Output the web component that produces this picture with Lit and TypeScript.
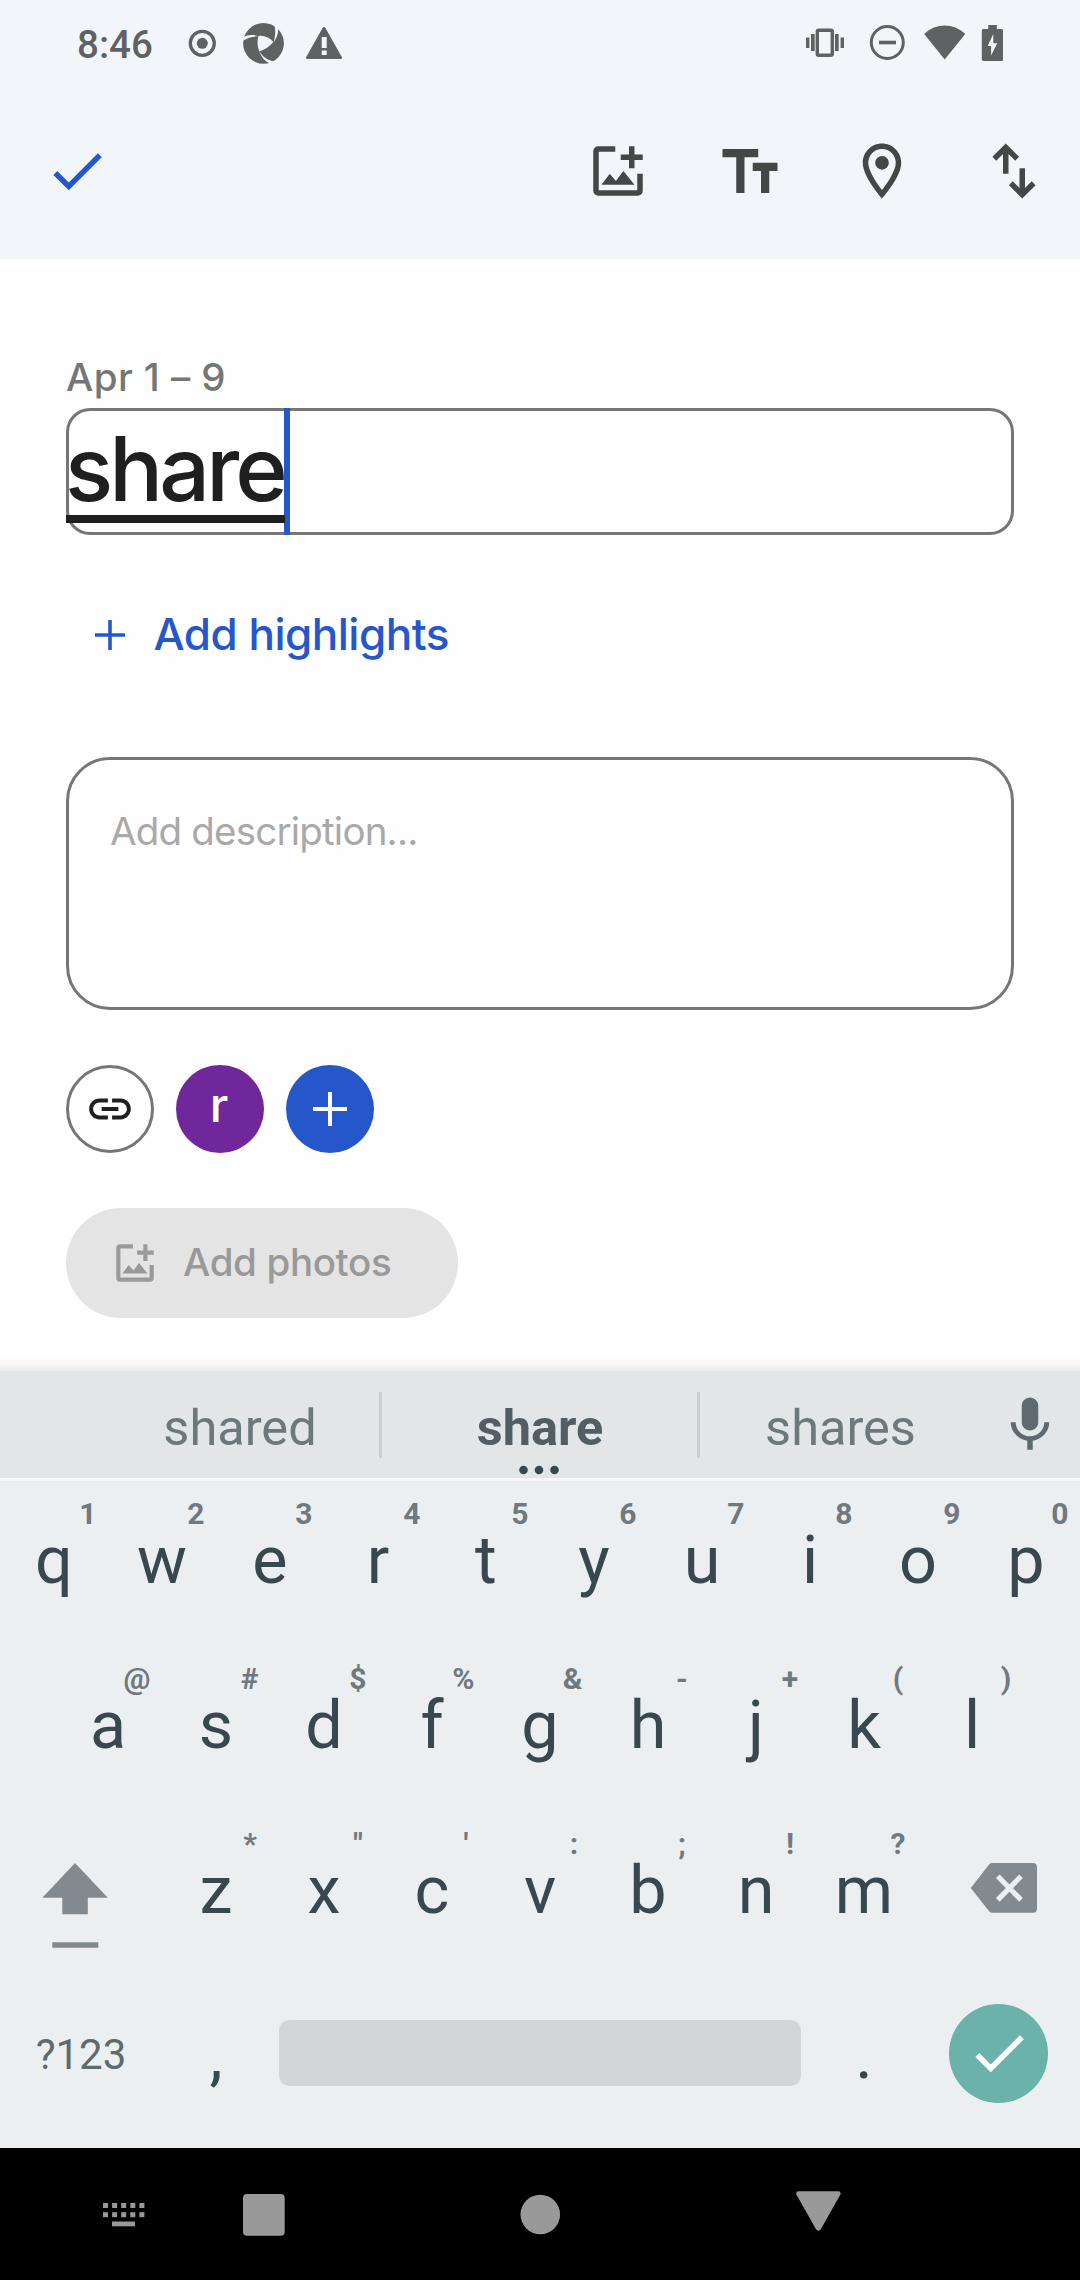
import { LitElement, html, css, svg } from "lit";
import { customElement, property } from "lit/decorators.js";

const glyphs: Record<string, unknown> = {
  check: svg`<path d="M9 16.17 4.83 12l-1.42 1.41L9 19 21 7l-1.41-1.41z"/>`,
  addPhoto: svg`<path d="M11 3H4.8A1.8 1.8 0 0 0 3 4.8v14.4A1.8 1.8 0 0 0 4.8 21h14.4a1.8 1.8 0 0 0 1.8-1.8V13h-2v6H5V5h6zM16 3h2v3h3v2h-3v3h-2V8h-3V6h3zM6 17l3-4 2.25 2.6L13.95 12 18 17z"/>`,
  textSize: svg`<path d="M2 4h13v3h-5v13H7V7H2zM13 9h9v3h-3v8h-3v-8h-3z"/>`,
  place: svg`<path fill-rule="evenodd" d="M12 2c-3.87 0-7 3.13-7 7 0 5.25 7 13 7 13s7-7.75 7-13c0-3.87-3.13-7-7-7zM7 9a5 5 0 0 1 10 0c0 2.88-2.88 7.19-5 9.88C9.92 16.21 7 11.85 7 9z"/><circle cx="12" cy="9" r="2.5"/>`,
  swap: svg`<path d="M9 2 4.15 6.85 5.55 8.25 8 5.8V13h2V5.8l2.45 2.45 1.4-1.4zM15 22l4.85-4.85-1.4-1.4L16 18.2V11h-2v7.2l-2.45-2.45-1.4 1.4z"/>`,
  link: svg`<path d="M3.9 12c0-1.71 1.39-3.1 3.1-3.1h4V7H7c-2.76 0-5 2.24-5 5s2.24 5 5 5h4v-1.9H7c-1.71 0-3.1-1.39-3.1-3.1zM8 13h8v-2H8v2zm9-6h-4v1.9h4c1.71 0 3.1 1.39 3.1 3.1s-1.39 3.1-3.1 3.1h-4V17h4c2.76 0 5-2.24 5-5s-2.24-5-5-5z"/>`,
  mic: svg`<path d="M12 14c1.66 0 3-1.34 3-3V5c0-1.66-1.34-3-3-3S9 3.34 9 5v6c0 1.66 1.34 3 3 3zm5.2-3c0 2.9-2.4 5.1-5.2 5.1S6.8 13.9 6.8 11H5c0 3.41 2.72 6.23 6 6.72V21h2v-3.28c3.28-.49 6-3.31 6-6.72z"/>`,
};

@customElement("ui-icon")
export class UiIcon extends LitElement {
  @property() name = "check";
  static styles = css`
    :host { display: block; flex: none; width: 66px; height: 66px; }
    svg { display: block; width: 100%; height: 100%; fill: currentColor; }
  `;
  render() {
    return html`<svg viewBox="0 0 24 24">${glyphs[this.name]}</svg>`;
  }
}

@customElement("status-bar")
export class StatusBar extends LitElement {
  static styles = css`
    :host { display: flex; height: 86px; color: #606162; }
    svg { display: block; fill: currentColor; height: 46px; flex: none; }
    .wrap { display: flex; width: 100%; justify-content: space-between; align-items: center; }
    .left, .right { display: flex; align-items: center; }
    .left { padding-left: 77px; }
    .right { padding-right: 77px; }
    .time { font: 500 38.5px/48px Roboto, sans-serif; width: 107px; padding-top: 3px; }
  `;
  render() {
    return html`<div class="wrap">
      <div class="left">
        <span class="time">8:46</span>
        <svg viewBox="184 20 158 46">
          <circle cx="202.3" cy="43.3" r="12" fill="none" stroke="currentColor" stroke-width="3.3"/>
          <circle cx="202.3" cy="43.3" r="5.5"/>
          <circle cx="263.5" cy="43.3" r="20.4"/>
          <g fill="#f2f5fa">
            <path d="M258.5 36c6-.8 11 1.700 14.800 6-3.500 4.500-8.300 7.600-14 9.500-1.900-5-2.500-10.500-.8-15.500z"/>
            <path d="M274.500 25l3.500 2.500c.8 5-.8 10-4.500 15 1.600-5.500 2.300-11 1-17.500zM242.500 41l.8-3.500c4-2.700 9.700-3.200 15.500-1.200-6 0-11 1.200-16.300 4.700zM259.500 51.500c3 5.200 7.500 8.500 14 9.800l-3.500 2.200c-5-2.200-8.500-6-10.500-12z"/>
          </g>
          <path fill-rule="evenodd" d="M324 27c.6 0 1 .3 1.300.8L341.800 57c.5 1-.1 2-1.200 2h-33.200c-1.100 0-1.700-1-1.200-2l16.500-29.200c.3-.5.700-.8 1.300-.8zM321.700 37h5v11h-5zM321.700 50.500h5v4.500h-5z"/>
        </svg>
      </div>
      <div class="right">
        <svg viewBox="806 20 197 46">
          <rect x="817.300" y="30.300" width="15" height="25" rx="1.500" fill="none" stroke="currentColor" stroke-width="3.400"/>
          <path d="M806 37.500h3.400v10.500H806zM811 34h3.700v17H811zM835 34h3.700v17H835zM840.600 37.500h3.400v10.500h-3.400z"/>
          <circle cx="887.300" cy="42.500" r="16" fill="none" stroke="currentColor" stroke-width="3"/>
          <path d="M879 40.700h17v3.600h-17z"/>
          <path d="M924.200 34c12-11.300 29-11.300 41 0L944.700 59.500z"/>
          <path fill-rule="evenodd" d="M988.200 25h8.600v4h4.700c1 0 1.700.7 1.700 1.700v28.600c0 1-.7 1.700-1.700 1.700h-18c-1 0-1.700-.7-1.700-1.700V30.700c0-1 .7-1.700 1.700-1.700h4.700zM993.300 34l-5.600 12h3.400v9.500l6.200-12.200h-4z"/>
        </svg>
      </div>
    </div>`;
  }
}

@customElement("story-editor")
export class StoryEditor extends LitElement {
  static styles = css`
    :host { display: flex; flex-direction: column; height: 1112px; box-sizing: border-box; padding: 94px 66px 0;
      background: #fefefe; font-family: Inter, "Open Sans", sans-serif; }
    .date { font-size: 38.5px; line-height: 48px; font-weight: 500; letter-spacing: .4px; color: #747775; }
    .title { display: flex; margin-top: 7px; height: 127px; border-radius: 24px; box-shadow: inset 0 0 0 3px #747775; }
    .word { position: relative; width: 218px; height: 127px; }
    .word span { display: block; margin-left: -1px; font-size: 89.5px; line-height: 121px; font-weight: 500;
      letter-spacing: -3.9px; color: #1f1f1f; white-space: nowrap; }
    .word i { position: absolute; left: 0; top: 107px; width: 219px; height: 7.5px; background: #1f1f1f; }
    .caret { width: 6px; background: #2557ca; }
    .highlights { display: flex; align-items: center; height: 88px; margin-top: 56px; padding-left: 29px; color: #2557ca;
      font-size: 44px; line-height: 56px; font-weight: 500; letter-spacing: -.5px; gap: 28.5px; }
    .highlights svg { width: 30px; height: 30px; margin-bottom: 1px; }
    .highlights span { padding-bottom: 3px; }
    svg { display: block; flex: none; }
    .description { box-sizing: border-box; height: 253px; margin-top: 78px; border: 3px solid #747775; border-radius: 44px;
      padding: 47px 41px; font-size: 38.5px; line-height: 48px; letter-spacing: -.8px; color: #a9a9a9; }
    .people { display: flex; gap: 22px; margin-top: 55px; }
    .dot { box-sizing: border-box; width: 88px; height: 88px; border-radius: 50%; display: flex; align-items: center; justify-content: center; }
    .linked { border: 3px solid #747775; color: #1f2023; }
    .linked ui-icon { width: 50px; height: 50px; }
    .avatar { background: #70279b; color: #fff; font-size: 48px; line-height: 60px; font-weight: 500; padding: 0 2px 9px 0; }
    .more { background: #2557ca; }
    .photos { display: flex; align-items: center; box-sizing: border-box; width: 392px; height: 110px; margin-top: 55px; padding-left: 44px;
      border-radius: 55px; background: #e4e4e4; color: #999; font-size: 38.5px; line-height: 48px; font-weight: 500; letter-spacing: -.35px; gap: 23px; }
    .photos ui-icon { width: 50px; height: 50px; }
    .photos span { padding-bottom: 2px; }
    .fade { height: 14px; margin: auto -66px 0; background: linear-gradient(#fefefe, #f8f8f8 50%, #ebebeb); }
  `;
  render() {
    return html`
      <div class="date">Apr 1 – 9</div>
      <div class="title"><div class="word"><i></i><span>share</span></div><div class="caret"></div></div>
      <div class="highlights">
        <svg viewBox="0 0 30 30" fill="currentColor"><path d="M13.200 0h3.600v13.200H30v3.600H16.800V30h-3.600V16.800H0v-3.600h13.200z"/></svg>
        <span>Add highlights</span>
      </div>
      <div class="description">Add description...</div>
      <div class="people">
        <div class="dot linked"><ui-icon name="link"></ui-icon></div>
        <div class="dot avatar">r</div>
        <div class="dot more"><svg width="34" height="34" viewBox="0 0 34 34" fill="#fff"><path d="M15 0h4v15h15v4H19v15h-4V19H0v-4h15z"/></svg></div>
      </div>
      <div class="photos"><ui-icon name="addPhoto"></ui-icon><span>Add photos</span></div>
      <div class="fade"></div>
    `;
  }
}

const rows: [string, string][][] = [
  [..."qwertyuiop"].map((k, i) => [k, "1234567890"[i]]),
  [..."asdfghjkl"].map((k, i) => [k, "@#$%&-+()"[i]]),
  [..."zxcvbnm"].map((k, i) => [k, "*\"':;!?"[i]]),
];

@customElement("soft-keyboard")
export class SoftKeyboard extends LitElement {
  static styles = css`
    :host { display: block; height: 777px; background: #ebeff2; font-family: Roboto, sans-serif; }
    .strip { display: flex; align-items: center; box-sizing: border-box; height: 110px; background: #e2e6e9; border-bottom: 3px solid #f5f7fa;
      font-size: 50.5px; line-height: 60px; color: #6d787c; }
    .word { position: relative; box-sizing: border-box; width: 315px; text-align: center; padding-top: 7px; }
    .first { width: 379px; padding-left: 101px; }
    .last { width: 281px; }
    .pick { font-weight: 700; color: #525e64; padding-left: 1px; }
    .pick svg { position: absolute; left: 137px; top: 74px; width: 40px; height: 10px; fill: #39474f; }
    .rule { width: 3px; height: 66px; background: #c9cdd0; }
    .mic { color: #5f6a70; margin: 0 0 0 16px; }
    .keys { display: flex; justify-content: center; height: 165px; }
    .key { position: relative; width: 108px; text-align: center; font-size: 66.5px; line-height: 80px; padding-top: 39px; box-sizing: border-box; color: #39474f; }
    .hint { position: absolute; right: 11.5px; top: 15px; min-width: 17px; text-align: center; font-size: 30px; line-height: 36px; font-weight: 700; color: #70797d; }
    .mod { width: 162px; color: #828a8f; display: flex; }
    .mod svg { display: block; fill: currentColor; width: 162px; height: 165px; }
    .sym { width: 162px; text-align: center; font-size: 42px; line-height: 50px; padding-top: 54px; color: #5f6a6f; box-sizing: border-box; }
    .space { width: 522px; height: 66px; margin: 44px 9px 0; border-radius: 10px; background: #d2d6d9; }
    .bottom { justify-content: flex-start; }
    .enter { width: 99px; height: 99px; margin: 28px 0 0 31px; border-radius: 50%; background: #6bb2aa; color: #fff; display: flex; align-items: center; justify-content: center; }
    .enter ui-icon { margin-bottom: 2px; }
  `;
  key([k, h]: [string, string]) {
    return html`<div class="key">${k}<span class="hint">${h}</span></div>`;
  }
  render() {
    return html`
      <div class="strip">
        <div class="word first">shared</div><div class="rule"></div>
        <div class="word pick">share<svg viewBox="0 0 40 10"><circle cx="4.500" cy="5" r="4.300"/><circle cx="20" cy="5" r="4.300"/><circle cx="35.500" cy="5" r="4.300"/></svg></div>
        <div class="rule"></div><div class="word last">shares</div>
        <ui-icon class="mic" name="mic"></ui-icon>
      </div>
      <div class="keys">${rows[0].map((k) => this.key(k))}</div>
      <div class="keys">${rows[1].map((k) => this.key(k))}</div>
      <div class="keys">
        <div class="mod"><svg viewBox="0 0 162 165"><path d="M75 52l32.800 34.700h-20V103.300H62.300V86.700h-20zM52.300 131.300h46v5.500h-46z"/></svg></div>
        ${rows[2].map((k) => this.key(k))}
        <div class="mod"><svg viewBox="918 0 162 165"><path d="M992 52h41a4 4 0 0 1 4 4v41.700a4 4 0 0 1-4 4h-41c-1.500 0-2.500-.7-3.300-2L970.800 77l17.900-23c.8-1.300 1.800-2 3.300-2z"/><path stroke="#ebeff2" stroke-width="5.200" d="M997.800 65.300l23.200 23.600M1021 65.300l-23.200 23.600"/></svg></div>
      </div>
      <div class="keys bottom">
        <div class="sym">?123</div><div class="key">,</div><div class="space"></div><div class="key">.</div>
        <div class="enter"><ui-icon name="check"></ui-icon></div>
      </div>
    `;
  }
}

@customElement("app-root")
export class AppRoot extends LitElement {
  static styles = css`
    :host { display: flex; flex-direction: column; width: 1080px; height: 2280px; overflow: hidden; background: #fefefe; }
    .top { height: 259px; background: #f2f5fa; }
    .bar { display: flex; align-items: center; height: 170px; padding: 0 33px 0 44px; color: #444746; }
    .done { color: #2557ca; margin-right: auto; }
    .actions { display: flex; gap: 66px; }
    .nav { flex: 1; background: #000; }
    .nav svg { display: block; width: 1080px; height: 132px; fill: #999; }
  `;
  render() {
    const dots = [0, 1, 2, 3, 4].flatMap((c) => [0, 1].map((r) => svg`<rect x=${103 + c * 9.1} y=${55 + r * 9.2} width="5" height="5"/>`));
    return html`
      <div class="top">
        <status-bar></status-bar>
        <div class="bar">
          <ui-icon class="done" name="check"></ui-icon>
          <div class="actions">
            <ui-icon name="addPhoto"></ui-icon><ui-icon name="textSize"></ui-icon>
            <ui-icon name="place"></ui-icon><ui-icon name="swap"></ui-icon>
          </div>
        </div>
      </div>
      <story-editor></story-editor>
      <soft-keyboard></soft-keyboard>
      <div class="nav">
        <svg viewBox="0 0 1080 132">
          ${dots}<rect x="112" y="73.500" width="23" height="4.800"/>
          <rect x="243" y="46" width="41.700" height="41.700" rx="4"/>
          <circle cx="540.300" cy="66.500" r="19.800"/>
          <path d="M798.500 43.300h39.800a2.300 2.300 0 0 1 2 3.500l-19.500 34.500a2.800 2.800 0 0 1-4.800 0L796.500 46.800a2.300 2.300 0 0 1 2-3.500z"/>
        </svg>
      </div>
    `;
  }
}
